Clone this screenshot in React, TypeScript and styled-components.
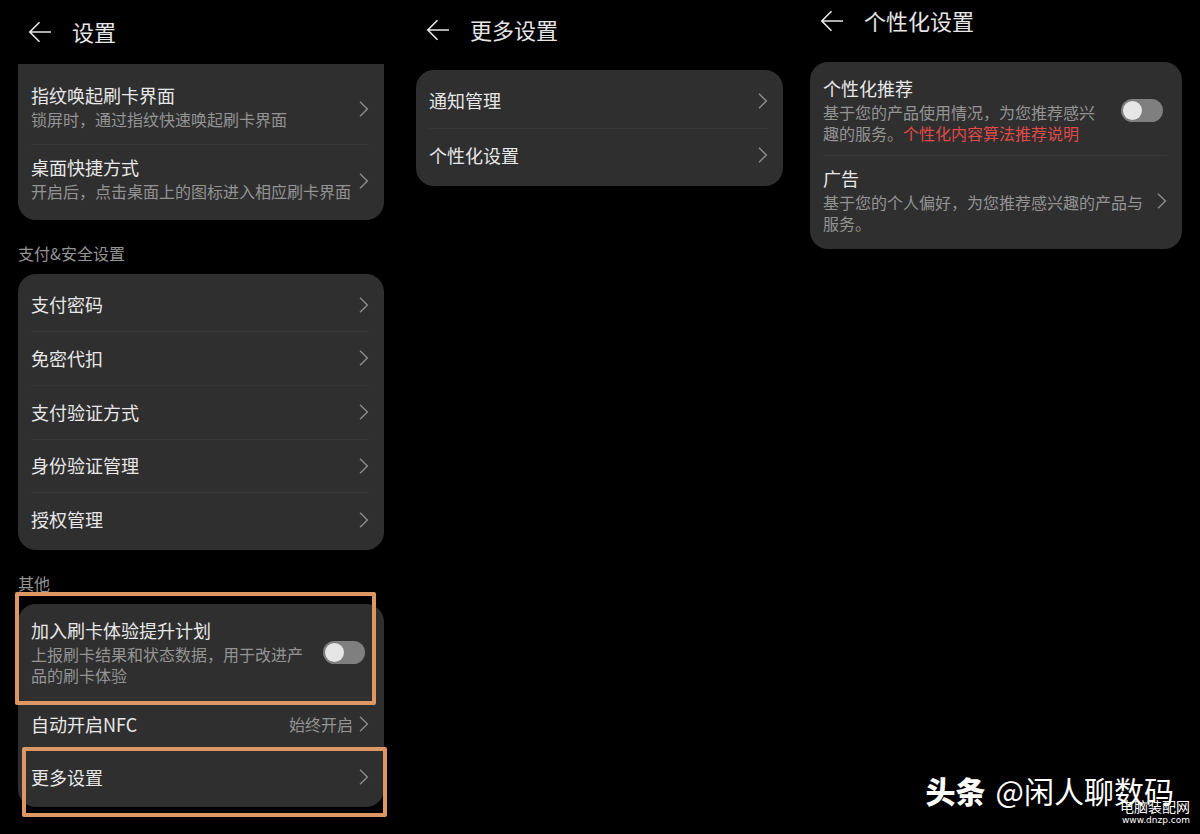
import React from 'react';
import styled, { createGlobalStyle } from 'styled-components';

const GlobalStyle = createGlobalStyle`
  *, *::before, *::after { box-sizing: border-box; }
  body {
    margin: 0;
    background: #000;
    color: #e6e6e6;
    font-family: 'Noto Sans CJK SC', sans-serif;
  }
  button { font: inherit; color: inherit; }
`;

const Page = styled.main`
  position: relative;
  display: grid;
  grid-template-columns: 366fr 399fr 399fr;
  min-height: 100vh;
  padding: 0 18px;
  overflow: hidden;
`;

const Screen = styled.section<{ $inset?: number }>`
  min-width: 0;
  padding-left: ${(p) => p.$inset ?? 0}px;
`;

const Header = styled.header<{ $height: number; $space: number }>`
  display: flex;
  align-items: center;
  gap: 20px;
  height: ${(p) => p.$height}px;
  margin-bottom: ${(p) => p.$space}px;
  padding-left: 10px;
`;

const BackButton = styled.button`
  display: flex;
  padding: 0;
  border: 0;
  background: none;
  cursor: pointer;
`;

const Title = styled.h1`
  margin: 0;
  padding-bottom: 2px;
  font-size: 22px;
  font-weight: 400;
  line-height: 32px;
`;

const Card = styled.div<{ $clipped?: boolean; $minHeight?: number }>`
  position: relative;
  display: flex;
  flex-direction: column;
  min-height: ${(p) => p.$minHeight ?? 0}px;
  padding: ${(p) => (p.$clipped ? 9 : 4)}px 15px 4px 13px;
  border-radius: ${(p) => (p.$clipped ? '0 0 18px 18px' : '18px')};
  background: #2f2f2f;
`;

const LinkRow = styled.button`
  display: flex;
  flex: 1 0 auto;
  align-items: center;
  gap: 6px;
  width: 100%;
  min-height: 53px;
  padding: 0;
  border: 0 solid #373737;
  background: none;
  text-align: left;
  cursor: pointer;

  * + & { border-top-width: 1px; }
`;

const DetailRow = styled(LinkRow)`
  min-height: 71px;
`;

const ToggleRow = styled.div`
  display: flex;
  align-items: center;
  gap: 12px;
  min-height: 89px;
`;

const Copy = styled.span`
  flex: 1;
  align-self: flex-start;
  min-width: 0;
  padding: 9px 0 11px;
`;

const Name = styled.span`
  display: block;
  flex: 1;
  color: #e8e8e8;
  font-size: 18px;
  line-height: 27px;
`;

const NameLabel = styled.label`
  display: block;
  color: #e8e8e8;
  font-size: 18px;
  line-height: 27px;
`;

const Note = styled.span`
  display: block;
  color: #949494;
  font-size: 16px;
  line-height: 21px;
`;

const NoteLink = styled.a`
  color: #e04a4a;
  text-decoration: none;
`;

const SectionLabel = styled.h2`
  margin: 0;
  padding: 23px 0 10px;
  color: #949494;
  font-size: 16px;
  font-weight: 400;
  line-height: 21px;
`;

const Switch = styled.input`
  appearance: none;
  flex: none;
  display: flex;
  align-items: center;
  width: 42px;
  height: 23px;
  margin: 0 4px 0 0;
  padding: 0 2px;
  border-radius: 12px;
  background: #7f7f7f;
  cursor: pointer;

  &::before {
    content: '';
    width: 19px;
    height: 19px;
    border-radius: 50%;
    background: #e6e6e6;
  }
  &:checked { justify-content: flex-end; }
`;

const Highlights = styled.div`
  position: absolute;
  inset: 0;
  pointer-events: none;
`;

const Frame = styled.div<{ $inset: string }>`
  position: absolute;
  inset: ${(p) => p.$inset};
  border: 4px solid #dc9765;
  border-radius: 2px;
`;

const Credit = styled.div`
  position: absolute;
  right: 26px;
  bottom: 22px;
  display: flex;
  align-items: center;
  gap: 10px;
  color: #fff;
  font-size: 30px;
  line-height: 44px;

  strong { font-weight: 900; }
`;

const SiteMark = styled.div`
  position: absolute;
  right: 10px;
  bottom: 7px;
  color: #fff;
  font-size: 14px;
  line-height: 16px;
  text-align: right;

  small {
    display: block;
    font-family: 'DejaVu Sans', sans-serif;
    font-size: 9px;
    line-height: 13px;
  }
`;

const Chevron = () => (
  <svg width="10" height="18" viewBox="0 0 10 18" fill="none" stroke="#8c8c8c" strokeWidth="1.4" aria-hidden="true">
    <path d="M1 1.8 8.4 9 1 16.2" />
  </svg>
);

const Back = () => (
  <BackButton type="button" aria-label="返回">
    <svg width="24" height="24" viewBox="0 0 24 24" fill="none" stroke="#e6e6e6" strokeWidth="1.6" aria-hidden="true">
      <path d="M11.5 2.2 1.8 12l9.7 9.8M1.8 12H23" />
    </svg>
  </BackButton>
);

const Item = ({ name, value }: { name: string; value?: string }) => (
  <LinkRow type="button">
    <Name>{name}</Name>
    {value && <Note>{value}</Note>}
    <Chevron />
  </LinkRow>
);

const DetailItem = ({ name, note }: { name: string; note: string }) => (
  <DetailRow type="button">
    <Copy>
      <Name>{name}</Name>
      <Note>{note}</Note>
    </Copy>
    <Chevron />
  </DetailRow>
);

const ToggleItem = ({ id, name, children }: { id: string; name: string; children: React.ReactNode }) => (
  <ToggleRow>
    <Copy>
      <NameLabel htmlFor={id}>{name}</NameLabel>
      <Note>{children}</Note>
    </Copy>
    <Switch id={id} type="checkbox" role="switch" />
  </ToggleRow>
);

const security = ['支付密码', '免密代扣', '支付验证方式', '身份验证管理', '授权管理'];

export default function App() {
  return (
    <>
      <GlobalStyle />
      <Page>
        <Screen>
          <Header $height={64} $space={0}>
            <Back />
            <Title>设置</Title>
          </Header>
          <Card $clipped $minHeight={156}>
            <DetailItem name="指纹唤起刷卡界面" note="锁屏时，通过指纹快速唤起刷卡界面" />
            <DetailItem name="桌面快捷方式" note="开启后，点击桌面上的图标进入相应刷卡界面" />
          </Card>
          <SectionLabel>支付&amp;安全设置</SectionLabel>
          <Card $minHeight={276}>
            {security.map((name) => (
              <Item key={name} name={name} />
            ))}
          </Card>
          <SectionLabel>其他</SectionLabel>
          <Card $minHeight={203}>
            <ToggleItem id="improve" name="加入刷卡体验提升计划">
              上报刷卡结果和状态数据，用于改进产品的刷卡体验
            </ToggleItem>
            <Item name="自动开启NFC" value="始终开启" />
            <Item name="更多设置" />
            <Highlights>
              <Frame $inset="-12px 8px 102px -3px" />
              <Frame $inset="143px -3px -10px 4px" />
            </Highlights>
          </Card>
        </Screen>

        <Screen $inset={32}>
          <Header $height={60} $space={10}>
            <Back />
            <Title>更多设置</Title>
          </Header>
          <Card $minHeight={116}>
            <Item name="通知管理" />
            <Item name="个性化设置" />
          </Card>
        </Screen>

        <Screen $inset={27}>
          <Header $height={42} $space={20}>
            <Back />
            <Title>个性化设置</Title>
          </Header>
          <Card>
            <ToggleItem id="recommend" name="个性化推荐">
              基于您的产品使用情况，为您推荐感兴趣的服务。
              <NoteLink href="#algorithm">个性化内容算法推荐说明</NoteLink>
            </ToggleItem>
            <DetailItem name="广告" note="基于您的个人偏好，为您推荐感兴趣的产品与服务。" />
          </Card>
        </Screen>

        <Credit>
          <strong>头条</strong>
          <span>@闲人聊数码</span>
        </Credit>
        <SiteMark>
          电脑装配网
          <small>www.dnzp.com</small>
        </SiteMark>
      </Page>
    </>
  );
}
